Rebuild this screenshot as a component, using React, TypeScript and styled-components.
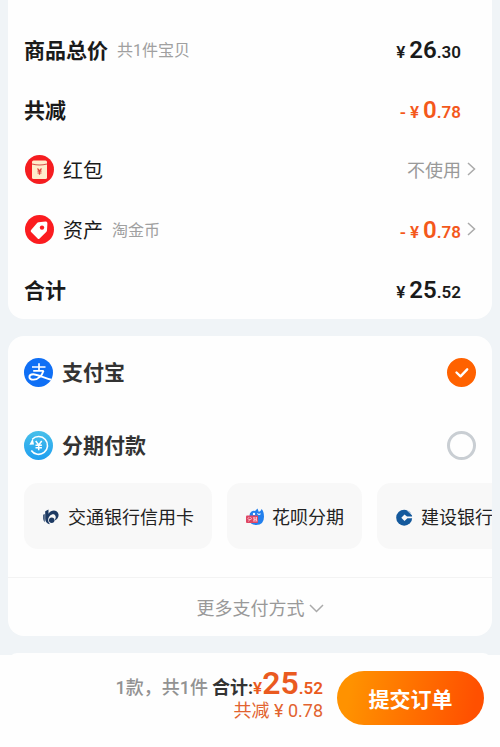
import React, { useState } from "react";
import styled, { createGlobalStyle } from "styled-components";

const GlobalStyle = createGlobalStyle`
  * { box-sizing: border-box; }
  body {
    margin: 0;
    background: #f0f4f7;
    color: #1a1a1a;
    font-family: Roboto, "Noto Sans CJK SC", sans-serif;
  }
  button, input { font-family: inherit; }
`;

const Page = styled.div`
  display: flex;
  flex-direction: column;
  min-height: 100vh;
`;

const Content = styled.main`
  display: flex;
  flex-direction: column;
  gap: 17px;
  padding: 0 8px;
`;

const Card = styled.section`
  background: #fefefe;
  border-radius: 16px;
  overflow: hidden;
`;

const SummaryCard = styled(Card)`
  padding-top: 19px;
  border-radius: 0 0 16px 16px;
`;

const NextCard = styled(Card)`
  height: 18px;
  margin-bottom: -16px;
`;

const SummaryRow = styled.div`
  display: flex;
  align-items: center;
  height: 60px;
  padding: 0 16px;
`;

const RowTitle = styled.span<{ $strong?: boolean }>`
  padding-top: 3px;
  font-size: ${(p) => (p.$strong ? 21 : 20)}px;
  font-weight: ${(p) => (p.$strong ? 700 : 400)};
  line-height: 30px;
`;

const RowNote = styled.span`
  margin-left: 9px;
  padding-top: 3px;
  font-size: 16px;
  line-height: 24px;
  color: #a0a0a0;
`;

const IconBox = styled.span`
  display: flex;
  margin: 0 9px 0 1px;
`;

const RowEnd = styled.span`
  display: flex;
  align-items: center;
  margin-left: auto;
  padding-right: 15px;
`;

const RowLink = styled.button`
  display: flex;
  align-items: center;
  gap: 6px;
  margin-left: auto;
  padding: 0;
  border: 0;
  background: none;
  font-size: 18px;
  line-height: 27px;
  color: #999;
  cursor: pointer;
`;

const LinkText = styled.span`
  padding-top: 2px;
`;

const PriceText = styled.span<{ $accent?: boolean }>`
  display: flex;
  align-items: baseline;
  gap: 4px;
  padding-top: 4px;
  font-size: 17px;
  line-height: 30px;
  font-weight: 600;
  color: ${(p) => (p.$accent ? "#f4581b" : "#1a1a1a")};
`;

const Whole = styled.span`
  font-size: 24px;
`;

const PayRow = styled.label`
  display: flex;
  align-items: center;
  gap: 9px;
  height: 73px;
  padding: 0 16px;
  cursor: pointer;
`;

const PayName = styled.span`
  padding-top: 1px;
  font-size: 21px;
  line-height: 30px;
  font-weight: 700;
  color: #333;
`;

const RadioWrap = styled.span`
  display: grid;
  margin-left: auto;
  > * { grid-area: 1 / 1; }
  > svg { pointer-events: none; }
`;

const Radio = styled.input`
  appearance: none;
  width: 29px;
  height: 29px;
  margin: 0;
  border: 3px solid #c9ced3;
  border-radius: 50%;
  cursor: pointer;
  &:checked {
    border-color: #ff6200;
    background: #ff6200;
  }
`;

const Chips = styled.div`
  display: flex;
  gap: 15px;
  padding: 1px 0 28px 16px;
  overflow: hidden;
`;

const Chip = styled.button`
  display: flex;
  flex: none;
  align-items: center;
  gap: 8px;
  height: 66px;
  padding: 2px 18px 0 19px;
  border: 0;
  border-radius: 14px;
  background: #f8f8f8;
  font-size: 18px;
  line-height: 27px;
  color: #222;
  cursor: pointer;
`;

const MoreButton = styled.button`
  display: flex;
  align-items: center;
  justify-content: center;
  gap: 4px;
  width: 100%;
  height: 59px;
  padding: 2px 0 0 20px;
  border: 0;
  border-top: 1px solid #f3f3f3;
  background: none;
  font-size: 18px;
  line-height: 27px;
  color: #999;
  cursor: pointer;
`;

const Footer = styled.footer`
  display: flex;
  flex: 1;
  align-items: flex-start;
  justify-content: flex-end;
  gap: 14px;
  position: relative;
  padding: 14px 16px 22px;
  background: #fefefe;
`;

const Totals = styled.div`
  display: flex;
  flex-direction: column;
  align-items: flex-end;
  font-size: 18px;
  line-height: 28px;
`;

const TotalLine = styled.div`
  display: flex;
  align-items: baseline;
  height: 28px;
  font-weight: 700;
  color: #333;
`;

const Count = styled.span`
  margin-right: 4px;
  font-weight: 500;
  color: #929292;
`;

const TotalPrice = styled.span`
  font-size: 17px;
  font-weight: 600;
  color: #ea5a20;
`;

const TotalWhole = styled.span`
  font-size: 32px;
`;

const Saved = styled.div`
  color: #e2632f;
`;

const Submit = styled.button`
  width: 147px;
  height: 54px;
  margin-top: 2px;
  border: 0;
  border-radius: 27px;
  background: linear-gradient(100deg, #ff9200 10%, #ff5000 92%);
  color: #fff;
  font-size: 21px;
  font-weight: 700;
  cursor: pointer;
`;

const Chevron = ({ down }: { down?: boolean }) =>
  down ? (
    <svg width="15" height="9" viewBox="0 0 15 9" fill="none" stroke="#aaa" strokeWidth="1.5">
      <path d="M1 1l6.5 6.500L14 1" />
    </svg>
  ) : (
    <svg width="9" height="14" viewBox="0 0 9 14" fill="none" stroke="#aaa" strokeWidth="1.5">
      <path d="M1 1l6.500 6L1 13" />
    </svg>
  );

const EnvelopeIcon = () => (
  <svg width="29" height="29" viewBox="0 0 29 29">
    <circle cx="14.5" cy="14.5" r="14.5" fill="#f51d20" />
    <rect x="7" y="5.5" width="15" height="18.500" rx="1.5" fill="#ffedcc" />
    <path d="M7 9q7.500 2 15 0" fill="none" stroke="#d8504a" strokeWidth="1.2" />
    <path d="M12.500 13.500l2 2.300 2-2.300M14.500 15.800v4M12.500 16.200h4M12.500 18h4" fill="none" stroke="#e0463e" strokeWidth="1.2" />
  </svg>
);

const TagIcon = () => (
  <svg width="29" height="29" viewBox="0 0 29 29">
    <circle cx="14.5" cy="14.5" r="14.5" fill="#fb1c20" />
    <path d="M13.600 7.300L20.500 6.600q2-.2 1.900 1.800L22 15.200q-.1 1-.8 1.700l-6.600 6.500q-1 1-2 0l-6.500-6.400q-1-1 0-2l5.800-6.700q.7-.9 1.700-1z" fill="#fff" />
    <circle cx="17" cy="12.600" r="2.200" fill="#fb1c20" />
  </svg>
);

const AlipayIcon = () => (
  <svg width="29" height="29" viewBox="0 0 29 29" fill="none" stroke="#fff">
    <defs>
      <clipPath id="alipay-disc"><circle cx="14.5" cy="14.5" r="14.5" /></clipPath>
    </defs>
    <g clipPath="url(#alipay-disc)">
      <rect width="29" height="29" fill="#0f6ff5" stroke="none" />
      <path d="M8 9h13.500M15 5.300v7.500M9.200 12.900h10.500" strokeWidth="1.7" />
      <path d="M19.500 12.700c-1.300 4.500-5.400 8.900-9.800 8.900-2.600 0-4.300-1-4.300-2.700s1.700-2.700 3.700-2.700c4.500 0 12 4.300 21 6.300" strokeWidth="1.9" />
    </g>
  </svg>
);

const InstallmentIcon = () => (
  <svg width="29" height="29" viewBox="0 0 29 29" fill="none" stroke="#fff">
    <defs>
      <linearGradient id="installment-fill" x1="0" y1="0" x2="0" y2="1">
        <stop offset="0" stopColor="#48c0ea" />
        <stop offset="1" stopColor="#1f9ff0" />
      </linearGradient>
    </defs>
    <circle cx="14.5" cy="14.5" r="14.5" fill="url(#installment-fill)" stroke="none" />
    <path d="M8.300 8.200a8.900 8.900 0 1 1-1 11.300" strokeWidth="1.6" />
    <path d="M8.700 7.500l1.300 6-4.600.2z" fill="#fff" stroke="none" />
    <path d="M11.700 10l3 3.900 3-3.900M14.700 13.900v5.400M11.500 14.300h6.400M11.500 16.800h6.400" strokeWidth="1.5" />
  </svg>
);

const BocomIcon = () => (
  <svg width="17" height="17" viewBox="0 0 17 17" fill="#1d3a63">
    <path d="M2.200 2.300L5.500.6v4.200C7.500 1.700 11 .8 13.500 2.300c2.400 1.500 2.800 4.600 1.100 7-.9 1.200-2.100 2-3.300 2.400 1.800-1.900 2-4.600.3-5.900C9.500 4.200 5.600 6.800 5.200 10.500c-.1 1.700.5 3.200 1.800 4.800-2.800-.5-4.800-2.400-4.800-5.300z" />
    <path d="M.2 5.700l1.500-.8v8.300C.6 12 .2 10.500.2 9z" />
    <circle cx="8.700" cy="11.300" r="2.700" />
  </svg>
);

const HuabeiIcon = () => (
  <svg width="18" height="18" viewBox="0 0 18 18">
    <path d="M3.500 7.500q0-2.500 2-4 1.700-1 3.500-.5l2.500-2.500 1.200 3.300q1.500.4 3-2.800 2.300 2.600 2.300 7.800 0 8.200-7.800 8.200-6.700 0-6.700-6z" fill="#2380ed" />
    <circle cx="8" cy="5.900" r="1.200" fill="#fff" />
    <path d="M11.300 5.500q1.500 1.700 3.200.2" fill="none" stroke="#fff" strokeWidth="1.1" />
    <rect y="7.500" width="12" height="7.500" rx="1" fill="#de4664" />
    <path d="M3.300 9L1.500 11M4.300 9l1.500 2M2.300 11.500h3M3.800 11.500l-1.300 2M7 10h4M7 13h4.500M8 9v4M10.500 9v4M8 11.500h2.500" fill="none" stroke="#ffd7dd" strokeWidth=".7" />
  </svg>
);

const CcbIcon = () => (
  <svg width="17" height="17" viewBox="0 0 17 17">
    <circle cx="8.200" cy="8.700" r="8" fill="#14599c" />
    <path d="M8.500 5.500L11 7.600H17V9.300H11.400L8.500 12 5.300 8.700z" fill="#f8f8f8" />
    <path d="M10.500.8l6 5.700" fill="none" stroke="#f8f8f8" strokeWidth=".7" />
  </svg>
);

const Price = ({ whole, cents, minus }: { whole: string; cents: string; minus?: boolean }) => (
  <PriceText $accent={minus}>
    {minus && <span>-</span>}
    <span>¥</span>
    <span>
      <Whole>{whole}</Whole>.{cents}
    </span>
  </PriceText>
);

const methods = [
  { id: "alipay", name: "支付宝", icon: <AlipayIcon /> },
  { id: "installment", name: "分期付款", icon: <InstallmentIcon /> },
];

const banks = [
  { name: "交通银行信用卡", icon: <BocomIcon /> },
  { name: "花呗分期", icon: <HuabeiIcon /> },
  { name: "建设银行", icon: <CcbIcon /> },
];

export default function App() {
  const [method, setMethod] = useState("alipay");
  return (
    <Page>
      <GlobalStyle />
      <Content>
        <SummaryCard>
          <SummaryRow>
            <RowTitle $strong>商品总价</RowTitle>
            <RowNote>共1件宝贝</RowNote>
            <RowEnd><Price whole="26" cents="30" /></RowEnd>
          </SummaryRow>
          <SummaryRow>
            <RowTitle $strong>共减</RowTitle>
            <RowEnd><Price minus whole="0" cents="78" /></RowEnd>
          </SummaryRow>
          <SummaryRow>
            <IconBox><EnvelopeIcon /></IconBox>
            <RowTitle>红包</RowTitle>
            <RowLink type="button"><LinkText>不使用</LinkText><Chevron /></RowLink>
          </SummaryRow>
          <SummaryRow>
            <IconBox><TagIcon /></IconBox>
            <RowTitle>资产</RowTitle>
            <RowNote>淘金币</RowNote>
            <RowLink type="button"><Price minus whole="0" cents="78" /><Chevron /></RowLink>
          </SummaryRow>
          <SummaryRow>
            <RowTitle $strong>合计</RowTitle>
            <RowEnd><Price whole="25" cents="52" /></RowEnd>
          </SummaryRow>
        </SummaryCard>

        <Card>
          {methods.map((m) => (
            <PayRow key={m.id}>
              {m.icon}
              <PayName>{m.name}</PayName>
              <RadioWrap>
                <Radio
                  type="radio"
                  name="method"
                  value={m.id}
                  checked={method === m.id}
                  onChange={() => setMethod(m.id)}
                />
                {method === m.id && (
                  <svg width="29" height="29" viewBox="0 0 29 29" fill="none">
                    <path d="M9.500 14.500l4 3.800 6.700-7" stroke="#fff" strokeWidth="2.400" strokeLinecap="round" strokeLinejoin="round" />
                  </svg>
                )}
              </RadioWrap>
            </PayRow>
          ))}
          <Chips>
            {banks.map((b) => (
              <Chip key={b.name} type="button">
                {b.icon}
                {b.name}
              </Chip>
            ))}
          </Chips>
          <MoreButton type="button">更多支付方式<Chevron down /></MoreButton>
        </Card>
        <NextCard />
      </Content>

      <Footer>
        <Totals>
          <TotalLine>
            <Count>1款，共1件</Count>
            <span>合计:</span>
            <TotalPrice>
              ¥<TotalWhole>25</TotalWhole>.52
            </TotalPrice>
          </TotalLine>
          <Saved>共减 ¥ 0.78</Saved>
        </Totals>
        <Submit type="button">提交订单</Submit>
      </Footer>
    </Page>
  );
}
